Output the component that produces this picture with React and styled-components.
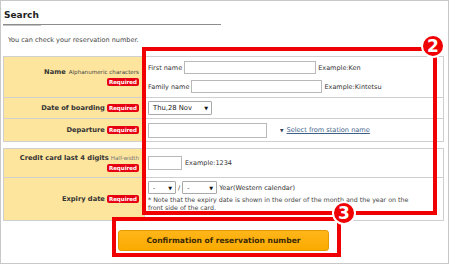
import styled, { createGlobalStyle } from "styled-components";

const GlobalStyle = createGlobalStyle`
  html, body {
    margin: 0;
    padding: 0;
    background: #fff;
  }
  body {
    font-family: "DejaVu Sans", Verdana, sans-serif;
    color: #333;
  }
`;

const Frame = styled.div`
  position: relative;
  box-sizing: border-box;
  width: 449px;
  height: 264px;
  border: 1px solid #c8c8c8;
  overflow: hidden;
`;

const Heading = styled.h2`
  position: relative;
  margin: 0 0 0 2px;
  width: 217px;
  padding: 8px 0 2px 1px;
  font-size: 9px;
  line-height: 13px;
  font-weight: bold;
  color: #222;
  border-bottom: 1px solid #8c8c8c;

  &::after {
    content: "";
    position: absolute;
    left: 0;
    bottom: -2px;
    width: 38px;
    height: 1px;
    background: #c4c4c4;
  }
`;

const Intro = styled.p`
  margin: 10px 0 0 7px;
  font-size: 6.5px;
  line-height: 10px;
  color: #444;
`;

const Table = styled.div`
  box-sizing: border-box;
  width: 441px;
  margin: ${(p) => p.$gap}px 0 0 2px;
  border: 1px solid #cfcfcf;
`;

const Row = styled.div`
  display: grid;
  grid-template-columns: 140px 1fr;
  height: ${(p) => p.$h}px;

  & + & {
    border-top: 1px solid #cfcfcf;
  }
`;

const Label = styled.div`
  display: flex;
  flex-direction: column;
  align-items: flex-end;
  justify-content: center;
  gap: 2px;
  padding-right: 5px;
  background: #fde59e;
  text-align: right;
`;

const LabelLine = styled.div`
  display: flex;
  align-items: center;
  gap: 2px;
  font-size: 6.7px;
  line-height: 8px;
  font-weight: bold;
  color: #333;
  white-space: nowrap;
`;

const Hint = styled.span`
  font-size: 5.6px;
  font-weight: normal;
  color: ${(p) => (p.$muted ? "#777" : "#444")};
  margin-left: ${(p) => (p.$muted ? 0 : 1)}px;
`;

const Required = styled.span`
  display: inline-block;
  padding: 0 2px;
  height: 8px;
  line-height: 8px;
  border-radius: 2px;
  background: #e60012;
  color: #fff;
  font-size: 5.5px;
  font-weight: bold;
`;

const Value = styled.div`
  display: flex;
  flex-direction: column;
  justify-content: ${(p) => (p.$top ? "flex-start" : "center")};
  gap: ${(p) => p.$gap || 0}px;
  padding: ${(p) => (p.$top ? "3px 0 0 3px" : "0 0 0 3px")};
  border-left: 1px solid #cfcfcf;
  background: #fff;
`;

const Line = styled.div`
  display: flex;
  align-items: center;
  gap: ${(p) => p.$gap ?? 2}px;
  font-size: 6.5px;
  color: #333;
  white-space: nowrap;
`;

const TextInput = styled.input.attrs({ type: "text" })`
  box-sizing: border-box;
  width: ${(p) => p.$w}px;
  height: ${(p) => p.$h || 13}px;
  margin: 0;
  padding: 0 2px;
  border: 1px solid #b9b9b9;
  background: #fff;
  font-size: 6.5px;

  &:focus {
    outline: none;
  }
`;

const Select = styled.div`
  box-sizing: border-box;
  display: flex;
  align-items: center;
  justify-content: space-between;
  width: ${(p) => p.$w}px;
  height: ${(p) => p.$h || 14}px;
  padding: 0 3px 0 4px;
  border: 1px solid #a9a9a9;
  border-radius: 1px;
  background: #fff;
  font-size: ${(p) => p.$fs || 6.8}px;
  color: #222;

  &::after {
    content: "▼";
    font-size: 5px;
    color: #111;
  }
`;

const StationLink = styled.a`
  display: inline-flex;
  align-items: center;
  gap: 3px;
  margin-left: 13px;
  color: #3d5f88;
  font-size: 6.6px;
  text-decoration: none;
`;

const LinkArrow = styled.span`
  font-size: 4.5px;
  color: #2d3d55;
`;

const LinkText = styled.span`
  text-decoration: underline;
`;

const Note = styled.p`
  margin: 0;
  font-size: 6.3px;
  line-height: 8px;
  color: #444;
`;

const ButtonBar = styled.div`
  display: flex;
  justify-content: center;
  width: 441px;
  margin: 9px 0 0 2px;
`;

const ConfirmButton = styled.button`
  box-sizing: border-box;
  width: 211px;
  height: 21px;
  border: 1px solid #e39b00;
  border-radius: 3px;
  background: linear-gradient(#ffb61a, #fbaa00);
  color: #3b2a05;
  font-family: "DejaVu Sans", Verdana, sans-serif;
  font-size: 7.6px;
  font-weight: bold;
  cursor: pointer;
`;

const Callout = styled.div`
  position: absolute;
  box-sizing: border-box;
  left: ${(p) => p.$x}px;
  top: ${(p) => p.$y}px;
  width: ${(p) => p.$w}px;
  height: ${(p) => p.$h}px;
  border: 4px solid #f00000;
  pointer-events: none;
`;

const StepBadge = styled.div`
  position: absolute;
  box-sizing: border-box;
  left: ${(p) => p.$x - 12}px;
  top: ${(p) => p.$y - 12}px;
  width: 24px;
  height: 24px;
  display: flex;
  align-items: center;
  justify-content: center;
  border: 2px solid #fff;
  border-radius: 50%;
  background: #f00000;
  color: #fff;
  font-family: "DejaVu Sans", Verdana, sans-serif;
  font-size: 17px;
  font-weight: bold;
  line-height: 1;
`;

export default function App() {
  return (
    <>
      <GlobalStyle />
      <Frame>
        <Heading>Search</Heading>
        <Intro>You can check your reservation number.</Intro>

        <Table $gap={11}>
          <Row $h={40}>
            <Label>
              <LabelLine>
                Name<Hint>Alphanumeric characters</Hint>
              </LabelLine>
              <Required>Required</Required>
            </Label>
            <Value $gap={6}>
              <Line>
                First name
                <TextInput $w={132} />
                Example:Ken
              </Line>
              <Line>
                Family name
                <TextInput $w={131} />
                Example:Kintetsu
              </Line>
            </Value>
          </Row>
          <Row $h={20}>
            <Label>
              <LabelLine>
                Date of boarding<Required>Required</Required>
              </LabelLine>
            </Label>
            <Value>
              <Line>
                <Select $w={64}>Thu,28 Nov</Select>
              </Line>
            </Value>
          </Row>
          <Row $h={22}>
            <Label>
              <LabelLine>
                Departure<Required>Required</Required>
              </LabelLine>
            </Label>
            <Value>
              <Line $gap={0}>
                <TextInput $w={119} $h={15} />
                <StationLink href="#">
                  <LinkArrow>▼</LinkArrow>
                  <LinkText>Select from station name</LinkText>
                </StationLink>
              </Line>
            </Value>
          </Row>
        </Table>

        <Table $gap={6}>
          <Row $h={28}>
            <Label>
              <LabelLine>
                Credit card last 4 digits<Hint $muted>Half-width</Hint>
              </LabelLine>
              <Required>Required</Required>
            </Label>
            <Value>
              <Line $gap={3}>
                <TextInput $w={34} $h={14} />
                Example:1234
              </Line>
            </Value>
          </Row>
          <Row $h={42}>
            <Label>
              <LabelLine>
                Expiry date<Required>Required</Required>
              </LabelLine>
            </Label>
            <Value $top $gap={2}>
              <Line $gap={2}>
                <Select $w={28} $h={13} $fs={6}>-</Select>
                /
                <Select $w={35} $h={13} $fs={6}>-</Select>
                Year(Western calendar)
              </Line>
              <Note>
                * Note that the expiry date is shown in the order of the month and the year on the
                <br />
                front side of the card.
              </Note>
            </Value>
          </Row>
        </Table>

        <ButtonBar>
          <ConfirmButton>Confirmation of reservation number</ConfirmButton>
        </ButtonBar>

        <Callout $x={141} $y={46} $w={295} $h={168} />
        <StepBadge $x={432} $y={45}>2</StepBadge>
        <Callout $x={111} $y={216} $w={229} $h={40} />
        <StepBadge $x={343} $y={212}>3</StepBadge>
      </Frame>
    </>
  );
}
